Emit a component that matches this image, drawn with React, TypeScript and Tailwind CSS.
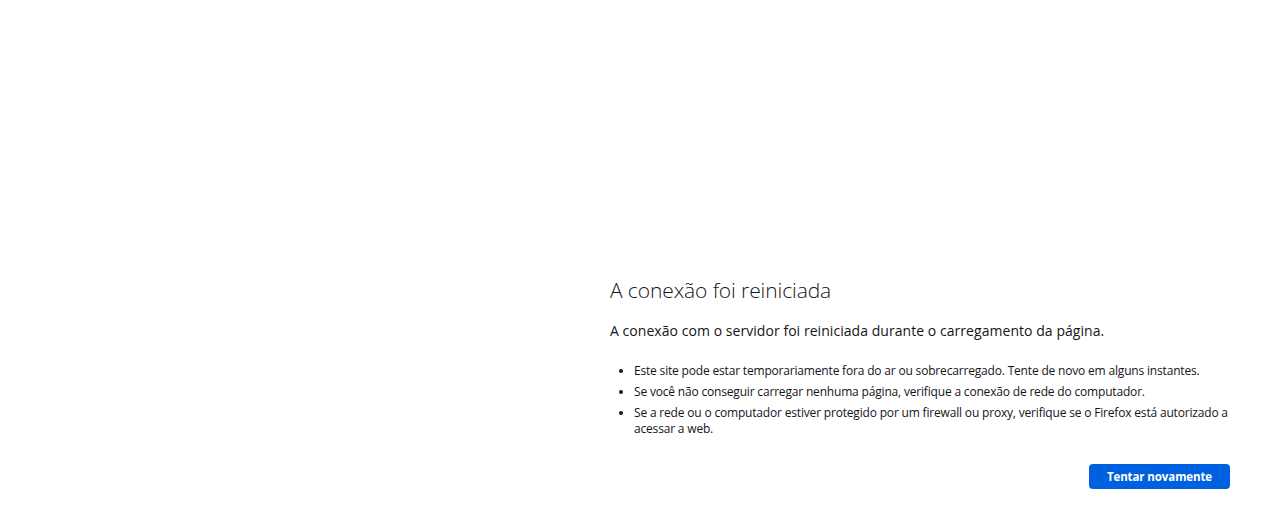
export default function App() {
  return (
    <div
      className="w-[1282px] h-[522px] bg-white text-[#15141a] overflow-hidden"
      style={{ fontFamily: '"Open Sans", "Noto Sans", sans-serif' }}
    >
      <div className="pl-[610px] pr-[52px] pt-[276px]">
        <h1 className="text-[21px] leading-[28px] font-light tracking-[-0.1px]">A conexão foi reiniciada</h1>
        <p className="mt-[17px] text-[14px] leading-[20px] tracking-[0.05px]">
          A conexão com o servidor foi reiniciada durante o carregamento da página.
        </p>
        <ul className="mt-[22px] pl-[24px] list-disc text-[12px] leading-[16px] tracking-[-0.18px]">
          <li className="mb-[5px]">Este site pode estar temporariamente fora do ar ou sobrecarregado. Tente de novo em alguns instantes.</li>
          <li className="mb-[5px]">Se você não conseguir carregar nenhuma página, verifique a conexão de rede do computador.</li>
          <li>Se a rede ou o computador estiver protegido por um firewall ou proxy, verifique se o Firefox está autorizado a acessar a web.</li>
        </ul>
        <div className="mt-[27px] flex justify-end">
          <button className="h-[25px] w-[141px] rounded-[4px] bg-[#0061e0] text-white text-[11.5px] font-bold tracking-[-0.1px]">
            Tentar novamente
          </button>
        </div>
      </div>
    </div>
  );
}
